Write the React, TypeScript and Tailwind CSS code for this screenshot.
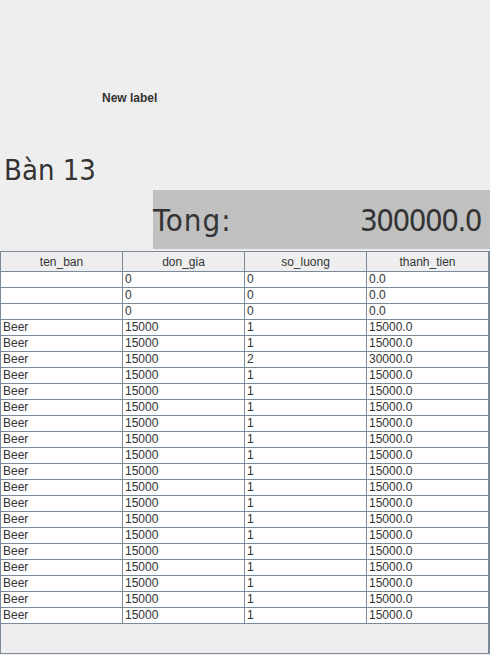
import React from 'react';

const headers = ['ten_ban', 'don_gia', 'so_luong', 'thanh_tien'];

const rows: string[][] = [
  ['', '0', '0', '0.0'],
  ['', '0', '0', '0.0'],
  ['', '0', '0', '0.0'],
  ...Array.from({ length: 19 }, (_, i) =>
    i === 2 ? ['Beer', '15000', '2', '30000.0'] : ['Beer', '15000', '1', '15000.0']
  ),
];

const colW = ['w-[122px]', 'w-[122px]', 'w-[122px]', 'w-[121px]'];

export default function App() {
  return (
    <div className="w-[490px] h-[655px] bg-[#eeeeee] overflow-hidden font-['Liberation_Sans',Arial,sans-serif] text-[#333333]">
      <div className="pt-[85px] pl-[102px] h-[152px]">
        <span className="text-[12px] leading-[16px] font-bold">New label</span>
      </div>

      <div className="pl-[4px] h-[38px] font-['DejaVu_Sans_Condensed','DejaVu_Sans',sans-serif] font-stretch-condensed text-[29px] leading-[36px]">
        Bàn 13
      </div>

      <div className="ml-[153px] h-[59px] bg-[#c0c0c0] flex items-center justify-between pr-[9px] font-['DejaVu_Sans_Condensed','DejaVu_Sans',sans-serif] font-stretch-condensed text-[31px] leading-[36px]">
        <span className="tracking-[1px]">Tong:</span>
        <span className="tracking-[-1.5px]">300000.0</span>
      </div>

      <div className="mt-[2px] w-[490px] h-[403px] border border-r-2 border-[#7a8a99] bg-[#eeeeee] text-[12px]">
        <div className="flex h-[20px] border-b border-[#7a8a99] bg-[#eeeeee]">
          {headers.map((h, i) => (
            <div
              key={h}
              className={`${colW[i]} ${i < 3 ? 'border-r border-[#7a8a99]' : ''} flex items-center justify-center leading-[18px]`}
            >
              {h}
            </div>
          ))}
        </div>
        {rows.map((r, ri) => (
          <div key={ri} className="flex h-[16px] bg-white border-b border-[#7a8a99]">
            {r.map((c, ci) => (
              <div
                key={ci}
                className={`${colW[ci]} ${ci < 3 ? 'border-r border-[#7a8a99]' : ''} pl-[2px] leading-[15px]`}
              >
                {c}
              </div>
            ))}
          </div>
        ))}
      </div>
    </div>
  );
}
